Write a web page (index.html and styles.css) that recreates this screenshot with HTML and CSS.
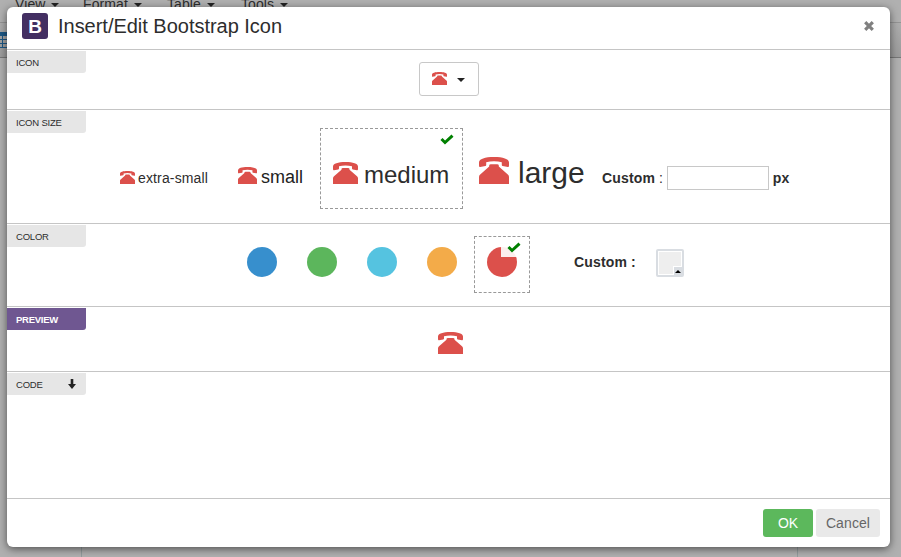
FILE: index.html
```html
<!DOCTYPE html>
<html lang="en">
<head>
<meta charset="utf-8">
<title>Insert/Edit Bootstrap Icon</title>
<link rel="stylesheet" href="styles.css">
</head>
<body>
<svg class="defs" aria-hidden="true">
  <symbol id="phone" viewBox="0 0 25 22" preserveAspectRatio="none">
    <path d="M0 7V4.500C0 1.500 5 0 12.500 0S25 1.500 25 4.500V7Q25 8.400 24 8.200L19.700 7.400Q19 7.200 19 6.500V4.200Q16 3.500 12.500 3.500T6 4.200V6.500Q6 7.200 5.300 7.400L1 8.200Q0 8.400 0 7Z"/>
    <path d="M0 22V16.200Q0 15 1 14.200L8.500 7.800V7Q8.500 6 10 6H15Q16.500 6 16.500 7V7.800L24 14.200Q25 15 25 16.200V22Z"/>
  </symbol>
  <symbol id="check" viewBox="0 0 14 11">
    <path d="M1.500 5 5 8.500 12.500 1.600" fill="none" stroke="currentColor" stroke-width="3"/>
  </symbol>
</svg>
<div class="menubar">
  <span class="m-view">View <i class="caret"></i></span>
  <span class="m-format">Format <i class="caret"></i></span>
  <span class="m-table">Table <i class="caret"></i></span>
  <span>Tools <i class="caret"></i></span>
</div>
<div class="toolbar"><svg class="grid-icon" viewBox="0 0 12 16"><path fill="#1d5785" d="M0 0h12v4H0z"/><path d="M0 7.500h12M0 11.500h12M0 15.500h12M5.500 4v12" stroke="#1d5785" fill="none"/></svg></div>
<div class="editor"></div>

<div class="dialog">
  <header class="head">
    <span class="logo">B</span>
    <h1>Insert/Edit Bootstrap Icon</h1>
    <svg class="close" viewBox="0 0 10 10"><path d="M1.200 1.200 8.800 8.800M8.800 1.200 1.200 8.800" stroke="#808080" stroke-width="3.200"/></svg>
  </header>

  <section class="row row-icon">
    <span class="label">ICON</span>
    <div class="content">
      <button class="picker"><svg class="phone xs"><use href="#phone"/></svg><i class="caret"></i></button>
    </div>
  </section>

  <section class="row row-size">
    <span class="label">ICON SIZE</span>
    <div class="content sizes">
      <span class="size size-xs"><svg class="phone xs"><use href="#phone"/></svg><span>extra-small</span></span>
      <span class="size size-sm"><svg class="phone sm"><use href="#phone"/></svg><span>small</span></span>
      <span class="size size-md selected"><svg class="phone md"><use href="#phone"/></svg><span>medium</span><svg class="check"><use href="#check"/></svg></span>
      <span class="size size-lg"><svg class="phone lg"><use href="#phone"/></svg><span>large</span></span>
      <span class="custom"><b>Custom</b> : <input type="text" aria-label="Custom size"><b>px</b></span>
    </div>
  </section>

  <section class="row row-color">
    <span class="label">COLOR</span>
    <div class="content colors">
      <span class="dot blue"></span>
      <span class="dot green"></span>
      <span class="dot cyan"></span>
      <span class="dot orange"></span>
      <span class="swatch selected"><span class="dot red"></span><span class="tick"><svg class="check"><use href="#check"/></svg></span></span>
      <b class="custom-color">Custom :</b>
      <span class="well"><span class="well-arrow"></span></span>
    </div>
  </section>

  <section class="row row-preview">
    <span class="label active">PREVIEW</span>
    <div class="content preview"><svg class="phone md"><use href="#phone"/></svg></div>
  </section>

  <section class="row row-code">
    <span class="label">CODE <svg class="down" viewBox="0 0 8 10"><path d="M2.700 0h2.600v5H8L4 10 0 5h2.700z" fill="#222"/></svg></span>
  </section>

  <footer class="foot">
    <button class="ok">OK</button>
    <button class="cancel">Cancel</button>
  </footer>
</div>
</body>
</html>
```

FILE: styles.css
```css
* { box-sizing: border-box; }
body {
  margin: 0;
  height: 557px;
  overflow: hidden;
  position: relative;
  background: #b0b0b0;
  color: #2d2d2d;
  font: 14px/20px "Liberation Sans", Arial, sans-serif;
}
.defs { position: absolute; width: 0; height: 0; }
.menubar {
  height: 22px;
  padding-left: 15px;
  display: flex;
  line-height: 9px;
  letter-spacing: .1px;
}
.menubar .caret { margin-left: 2px; }
.m-view { width: 68px; }
.m-format { width: 84px; }
.m-table { width: 74px; }
.toolbar {
  height: 36px;
  padding-top: 9px;
  background: linear-gradient(#adadad, #9b9b9b);
  border-top: 1px solid #949494;
  border-bottom: 1px solid #777;
}
.grid-icon { display: block; width: 12px; height: 16px; margin-left: -3px; }
.editor { margin: 0 103px 0 81px; height: 499px; border: solid #929c9d; border-width: 0 1px; }
.caret {
  display: inline-block;
  border: 4px solid transparent;
  border-top-color: #222;
  border-bottom: 0;
  vertical-align: middle;
}
.dialog {
  position: absolute;
  left: 7px;
  top: 7px;
  width: 883px;
  height: 540px;
  background: #fff;
  border-radius: 6px;
  box-shadow: 0 2px 8px rgba(0, 0, 0, .55);
  display: grid;
  grid-template-rows: 43px 60px 114px 83px 65px 127px 48px;
}
.head, .row { border-bottom: 1px solid #c5c5c5; }
.head { display: flex; align-items: flex-start; padding: 6px 16px 0 15px; }
.logo {
  width: 26px;
  height: 26px;
  border-radius: 3px;
  background: #432f62;
  color: #fff;
  font: bold 19px/27px "Liberation Sans", Arial, sans-serif;
  text-align: center;
}
h1 { margin: 0 0 0 10px; font-weight: 400; font-size: 20px; line-height: 26px; letter-spacing: -.02px; }
.close { width: 10px; height: 10px; margin: 8px 0 0 auto; }
.row { display: flex; }
.label {
  flex: none;
  display: flex;
  align-items: center;
  width: 79px;
  height: 22px;
  margin-top: 1px;
  padding-left: 9px;
  padding-top: 1px;
  background: #e6e6e6;
  border-radius: 0 0 3px 0;
  font-size: 9.5px;
  letter-spacing: -.2px;
}
.label.active { background: #6f5791; color: #fff; font-weight: 700; letter-spacing: -.25px; }
.down { width: 8px; height: 10px; margin-left: 25px; margin-top: -1px; }
.content { flex: 1; display: flex; }
.phone { display: block; flex: none; fill: #dc504b; }
.xs { width: 15px; height: 13px; }
.sm { width: 19px; height: 17px; }
.md { width: 25px; height: 22px; }
.lg { width: 30px; height: 27px; }
.picker {
  width: 60px;
  height: 34px;
  margin: 12px 0 0 333px;
  padding: 0 12px 1px;
  display: flex;
  align-items: center;
  background: #fff;
  border: 1px solid #c8c8c8;
  border-radius: 3px;
}
.picker .caret { margin-left: 10px; margin-top: 2px; }
.sizes { align-items: flex-start; padding-left: 34px; }
.size { display: flex; align-items: baseline; white-space: nowrap; }
.size-xs { margin-top: 58px; width: 118px; }
.size-xs span { margin-left: 3px; letter-spacing: .14px; }
.size-xs .phone, .size-lg .phone { position: relative; top: 1px; }
.size-sm { margin-top: 56px; width: 82px; font-size: 18px; }
.size-sm .phone { position: relative; top: 1px; }
.size-sm span { margin-left: 4px; color: #222; }
.selected { border: 1px dashed #999; position: relative; }
.size-md { margin-top: 18px; width: 143px; height: 81px; padding: 32px 0 0 12px; font-size: 24px; line-height: 27px; }
.size-md .phone { position: relative; top: 1px; }
.size-md span { margin-left: 6px; }
.size-lg { margin: 46px 0 0 16px; width: 123px; font-size: 30px; line-height: 34px; }
.size-lg span { margin-left: 9px; }
.check { position: absolute; right: 8px; top: 5px; width: 14px; height: 11px; color: #008000; }
.custom { margin-top: 56px; display: flex; align-items: center; height: 24px; white-space: pre; }
.custom b, .custom-color { letter-spacing: .15px; }
input { width: 102px; height: 24px; border: 1px solid #c8c8c8; margin: 0 4px 0 0; padding: 2px 5px; }
.colors { align-items: flex-start; padding-left: 161px; }
.dot { flex: none; width: 30px; height: 30px; margin: 23px 30px 0 0; border-radius: 50%; }
.blue { background: #378fcd; }
.green { background: #5cb65c; }
.cyan { background: #55c3e0; }
.orange { background: #f3ab49; }
.red { display: block; margin: 0; background: #dc504b; }
.swatch { flex: none; width: 56px; height: 57px; margin: 12px 0 0 -13px; padding: 10px 12px; }
.tick { position: absolute; right: 3px; top: 0; width: 25px; height: 20px; background: rgba(255, 255, 255, .9); }
.tick .check { right: 5px; top: 5px; }
.custom-color { margin: 28px 0 0 44px; width: 82px; }
.well { width: 28px; height: 28px; margin-top: 25px; border: 2px solid #d9dde2; border-radius: 2px; background: #eee; box-shadow: inset 0 0 0 1px #fff; display: flex; align-items: flex-end; justify-content: flex-end; }
.well-arrow { width: 8px; height: 8px; background: #d9dde2; box-shadow: -1px -1px #fff; padding: 3px 0 0 1px; }
.well-arrow::after { content: ""; display: block; width: 0; border: 3px solid transparent; border-bottom-color: #000; border-top: 0; }
.preview { padding: 25px 0 0 352px; }
.foot { display: flex; justify-content: flex-end; padding: 10px 10px 0 0; gap: 3px; }
.foot button { height: 28px; border: 0; border-radius: 3px; font: 14px/28px "Liberation Sans", Arial, sans-serif; padding: 0; }
.ok { width: 50px; background: #5cb85c; color: #fff; }
.foot .cancel { width: 64px; background: #e9e9e9; color: #666; letter-spacing: .1px; }
```
